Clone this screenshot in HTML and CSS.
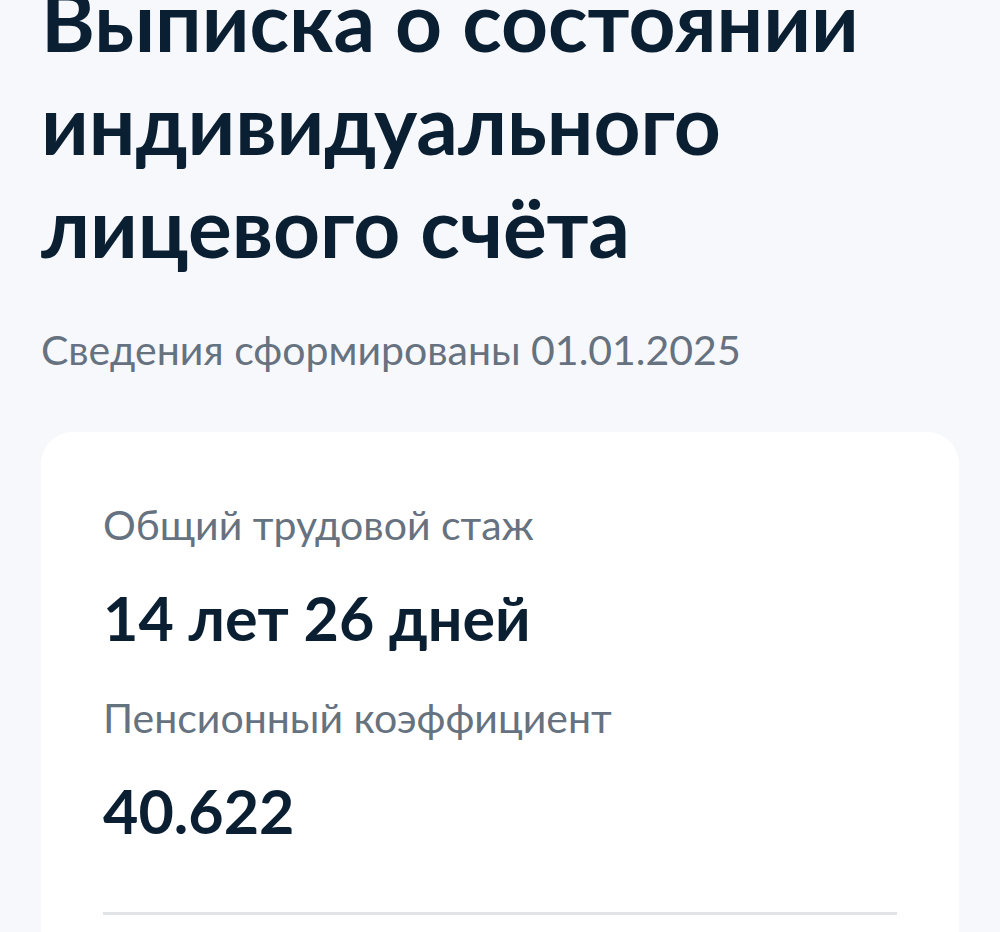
FILE: index.html
```html
<!DOCTYPE html>
<html lang="ru">
<head>
<meta charset="utf-8">
<title>Выписка о состоянии индивидуального лицевого счёта</title>
<link rel="stylesheet" href="styles.css">
</head>
<body>
<main class="page">
  <h1 class="title">Выписка о состоянии индивидуального лицевого счёта</h1>
  <p class="subtitle">Сведения сформированы 01.01.2025</p>
  <section class="card">
    <div class="field">
      <div class="field-label">Общий трудовой стаж</div>
      <div class="field-value">14 лет 26 дней</div>
    </div>
    <div class="field">
      <div class="field-label">Пенсионный коэффициент</div>
      <div class="field-value">40.622</div>
    </div>
    <hr class="divider">
  </section>
</main>
</body>
</html>
```

FILE: styles.css
```css
html, body {
  margin: 0;
  padding: 0;
}

body {
  background: #f6f8fc;
  font-family: Lato, "Noto Sans", sans-serif;
  color: #0b1f33;
  overflow: hidden;
  height: 932px;
}

/* page is scrolled a little, so the first title line sits partly above the fold */
.page {
  margin-top: -31px;
  padding: 0 41px;
}

.title {
  margin: 0;
  font-size: 82px;
  line-height: 103px;
  font-weight: 700;
  color: #0b1f33;
  max-width: 900px;
}

.subtitle {
  margin: 48px 0 0;
  font-size: 41px;
  line-height: 48px;
  color: #66727f;
}

.card {
  margin-top: 58px;
  background: #ffffff;
  border-radius: 32px;
  padding: 69px 62px 0;
  min-height: 600px;
}

.field-label {
  font-size: 41px;
  line-height: 48px;
  color: #66727f;
}

.field-value {
  margin-top: 33px;
  font-size: 61px;
  line-height: 72px;
  font-weight: 700;
  color: #0b1f33;
}

.field + .field {
  margin-top: 40px;
}

.divider {
  margin: 65px 0 0;
  border: 0;
  height: 3px;
  background: #e2e3e5;
}
```
